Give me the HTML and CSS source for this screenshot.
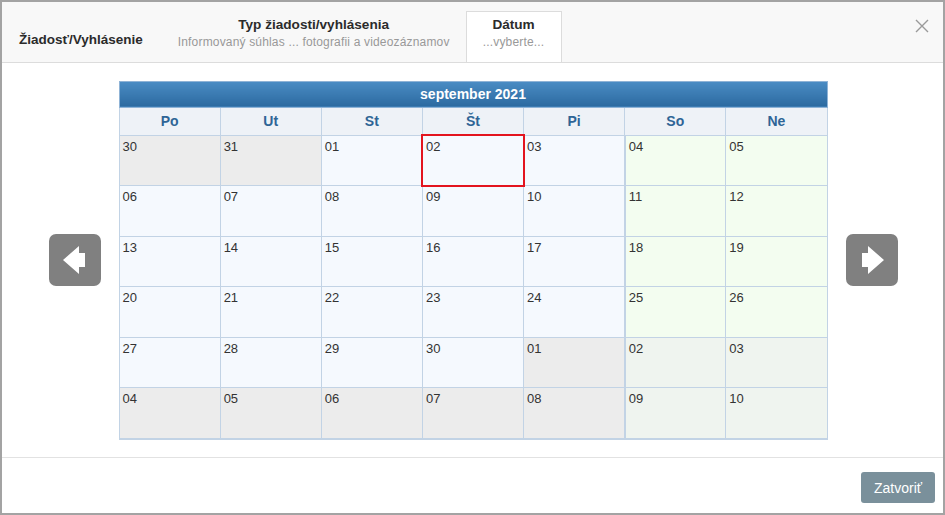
FILE: index.html
```html
<!DOCTYPE html>
<html lang="sk">
<head>
    <meta charset="UTF-8">
    <title>Žiadosť/Vyhlásenie</title>
    <link rel="stylesheet" href="styles.css">
</head>
<body>

    <div class="dialog">
        <div class="dlgHead">
            <div class="dlgTitle">Žiadosť/Vyhlásenie</div>
            <div class="tab">
                <div class="tabName">Typ žiadosti/vyhlásenia</div>
                <div class="tabValue">Informovaný súhlas ... fotografii a videozáznamov</div>
            </div>
            <div class="tab active">
                <div class="tabName">Dátum</div>
                <div class="tabValue">...vyberte...</div>
            </div>
            <div class="close">
                <svg width="14" height="14" viewBox="0 0 14 14">
                    <path d="M1 1 L13 13 M13 1 L1 13" stroke="#9a9a9a" stroke-width="1.4" fill="none"/>
                </svg>
            </div>
        </div>

        <div class="dlgBody">
            <div class="navBtn">
                <svg width="52" height="52" viewBox="0 0 52 52">
                    <polygon points="14,26 30,12 30,19 36,19 36,33 30,33 30,40" fill="#fff"/>
                </svg>
            </div>

            <table class="cal">
                <tr>
                    <th class="month" colspan="7">september 2021</th>
                </tr>
                <tr class="days">
                    <th>Po</th><th>Ut</th><th>St</th><th>Št</th><th>Pi</th><th class="sat">So</th><th>Ne</th>
                </tr>
                <tr>
                    <td class="other">30</td><td class="other">31</td><td>01</td><td class="sel">02</td><td>03</td><td class="sat we">04</td><td class="we">05</td>
                </tr>
                <tr>
                    <td>06</td><td>07</td><td>08</td><td>09</td><td>10</td><td class="sat we">11</td><td class="we">12</td>
                </tr>
                <tr>
                    <td>13</td><td>14</td><td>15</td><td>16</td><td>17</td><td class="sat we">18</td><td class="we">19</td>
                </tr>
                <tr>
                    <td>20</td><td>21</td><td>22</td><td>23</td><td>24</td><td class="sat we">25</td><td class="we">26</td>
                </tr>
                <tr>
                    <td>27</td><td>28</td><td>29</td><td>30</td><td class="other">01</td><td class="sat we other">02</td><td class="we other">03</td>
                </tr>
                <tr class="last">
                    <td class="other">04</td><td class="other">05</td><td class="other">06</td><td class="other">07</td><td class="other">08</td><td class="sat we other">09</td><td class="we other">10</td>
                </tr>
            </table>

            <div class="navBtn">
                <svg width="52" height="52" viewBox="0 0 52 52">
                    <polygon points="38,26 22,12 22,19 16,19 16,33 22,33 22,40" fill="#fff"/>
                </svg>
            </div>
        </div>

        <div class="dlgFoot">
            <button class="btnClose">Zatvoriť</button>
        </div>
    </div>

</body>
</html>
```

FILE: styles.css
```css
html, body {
    margin: 0;
    background: #fff;
}
.dialog {
    width: 945px;
    height: 515px;
    box-sizing: border-box;
    border: 2px solid #a3a3a3;
    display: flex;
    flex-direction: column;
    font-family: "Liberation Sans", Arial, sans-serif;
    color: #333;
}

/* head */
.dlgHead {
    height: 61px;
    box-sizing: border-box;
    background: #f8f8f8;
    border-bottom: 1px solid #dcdcdc;
    display: flex;
    align-items: flex-start;
    padding-top: 9px;
    position: relative;
}
.dlgTitle {
    margin: 19px 0 0 17px;
    font-size: 13.5px;
    line-height: 20px;
    font-weight: bold;
    color: #2b2b2b;
}
.tab {
    margin-left: 19px;
    padding: 4px 15px 0;
    height: 47px;
    text-align: center;
    border: 1px solid transparent;
    border-bottom: none;
}
.tab.active {
    margin-left: 0;
    width: 96px;
    padding: 4px 0 0;
    background: #fff;
    border-color: #dcdcdc;
    height: 51px;
    box-sizing: border-box;
}
.tabName {
    font-size: 13.6px;
    line-height: 18px;
    font-weight: bold;
    color: #2b2b2b;
}
.tabValue {
    font-size: 12px;
    line-height: 16px;
    letter-spacing: .17px;
    color: #999;
}
.close {
    position: absolute;
    right: 14px;
    top: 17px;
}

/* body */
.dlgBody {
    flex: 1;
    display: flex;
    align-items: center;
    justify-content: center;
    gap: 18px;
    padding-left: 1px;
}
.navBtn {
    width: 52px;
    height: 52px;
    background: #808080;
    border-radius: 7px;
}
.navBtn svg {
    display: block;
}

.cal {
    width: 709px;
    table-layout: fixed;
    border-collapse: collapse;
    font-size: 13px;
}
.cal th.month {
    height: 25px;
    padding: 0;
    background: linear-gradient(#4a8cc4, #2c6aa0);
    border: 1px solid #8fb3d6;
    color: #fff;
    font-size: 14px;
    font-weight: bold;
}
.cal .days th {
    height: 27px;
    padding: 0;
    background: #eef2f7;
    border: 1px solid #c2d3e5;
    color: #2e6596;
    font-size: 14px;
    font-weight: bold;
}
.cal td {
    height: 46.5px;
    padding: 3px 3px 0;
    vertical-align: top;
    background: #f5f9fe;
    border: 1px solid #c2d3e5;
    color: #333;
    line-height: 16px;
}
.cal td.other {
    background: #ececec;
}
.cal td.we {
    background: #f3fdf0;
}
.cal td.we.other {
    background: #eff4ef;
}
.cal .sat {
    border-left: 2px solid #c2d3e5;
}
.cal .last td {
    border-bottom: 2px solid #c2d3e5;
}
.cal td.sel {
    outline: 2px solid #e3141e;
    outline-offset: -1px;
}

/* foot */
.dlgFoot {
    height: 56px;
    box-sizing: border-box;
    border-top: 1px solid #e2e2e2;
    display: flex;
    justify-content: flex-end;
    align-items: flex-start;
    padding: 14px 8px 0 0;
}
.btnClose {
    width: 74px;
    height: 31px;
    border: none;
    border-radius: 3px;
    background: #7a909b;
    color: #fff;
    font-family: "Liberation Sans", Arial, sans-serif;
    font-size: 14px;
    padding: 0;
}
```
